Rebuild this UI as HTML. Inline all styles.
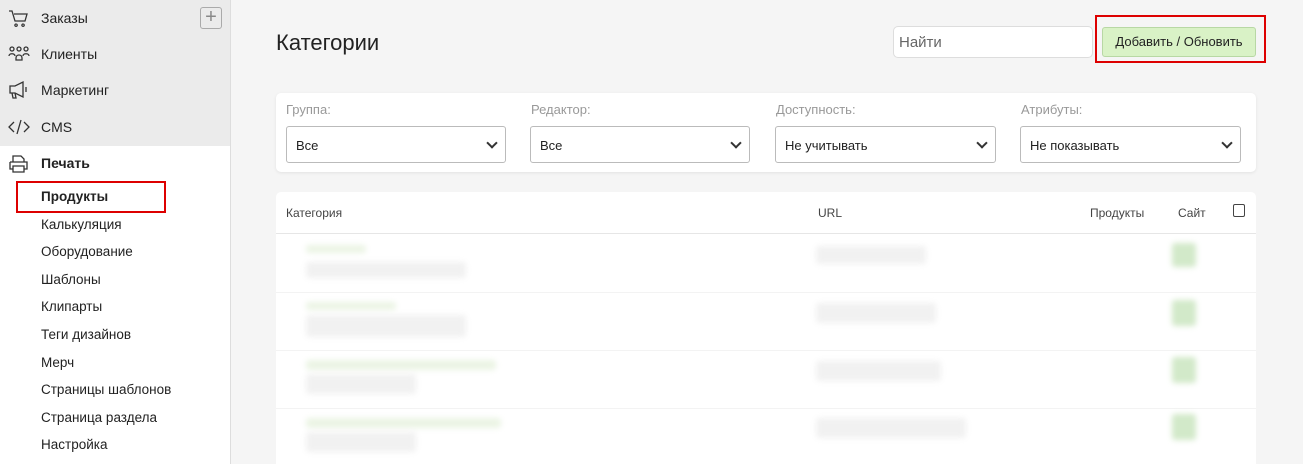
<!DOCTYPE html><html><head><meta charset="utf-8"><style>
*{box-sizing:border-box;margin:0;padding:0}
html,body{width:1303px;height:464px;overflow:hidden}
body{background:#f5f5f5;font-family:"Liberation Sans",sans-serif;position:relative;color:#222}
.a{position:absolute}
.sb{left:0;top:0;width:231px;height:464px;background:#fff;border-right:1px solid #ddd}
.sbg{left:0;top:0;width:230px;height:146px;background:#ebebeb}
.it{left:41px;font-size:14px;color:#222;line-height:16px}
.sub{left:41px;font-size:13.5px;color:#222;line-height:16px}
.lbl{font-size:13px;color:#999}
.sel{height:37px;border:1px solid #bbb;border-radius:3px;background:#fff;font-size:13px;padding:11px 9px;color:#222}
.sel:after{content:"";position:absolute;right:9px;top:12px;width:6px;height:6px;border-right:2px solid #333;border-bottom:2px solid #333;transform:rotate(45deg)}
.th{font-size:12px;color:#444;top:206px}
.bl{filter:blur(3px);border-radius:3px}
.g{background:#f1f1f1}.gr{background:#ebf4e4}.sq{background:#d2e9c9}
</style></head><body>
<div class="a sb"></div><div class="a sbg"></div>
<svg class="a" style="left:8px;top:8px" width="24" height="180" fill="none" stroke="#333" stroke-width="1.3">
<path d="M1 3h3l3 10h10l2-7H6M8 16a1.2 1.2 0 1 0 .1 0M15 16a1.2 1.2 0 1 0 .1 0"/>
<g transform="translate(0,38)"><circle cx="4" cy="3" r="2"/><circle cx="11" cy="3" r="2"/><circle cx="18" cy="3" r="2"/><path d="M1 10c0-3 6-3 6 0M8 12c0-4 6-4 6 0v2H8zM15 10c0-3 6-3 6 0"/></g>
<g transform="translate(0,74)"><path d="M2 4h5l8-4v15l-8-4H2zM4 11l1 5h3l-1-5M18 5v5"/></g>
<g transform="translate(0,111)"><path d="M6 3L1 8l5 5M16 3l5 5-5 5M13 1L9 15"/></g>
<g transform="translate(1,147)"><path d="M4 1h8l3 3v3H4zM1 7h17v7h-3M4 14H1V7M4 11h11v6H4z"/></g>
</svg>
<div class="a it" style="top:10px">Заказы</div>
<div class="a" style="left:200px;top:7px;width:22px;height:22px;border:1px solid #aaa;border-radius:3px;color:#888;font-size:20px;line-height:19px;text-align:center">+</div>
<div class="a it" style="top:46px">Клиенты</div>
<div class="a it" style="top:82px">Маркетинг</div>
<div class="a it" style="top:119px">CMS</div>
<div class="a it" style="top:155px;font-weight:bold">Печать</div>
<div class="a" style="left:16px;top:181px;width:150px;height:32px;border:2px solid #d00"></div>
<div class="a sub" style="top:189px;font-weight:bold">Продукты</div>
<div class="a sub" style="top:217px">Калькуляция</div>
<div class="a sub" style="top:244px">Оборудование</div>
<div class="a sub" style="top:272px">Шаблоны</div>
<div class="a sub" style="top:299px">Клипарты</div>
<div class="a sub" style="top:327px">Теги дизайнов</div>
<div class="a sub" style="top:355px">Мерч</div>
<div class="a sub" style="top:382px">Страницы шаблонов</div>
<div class="a sub" style="top:410px">Страница раздела</div>
<div class="a sub" style="top:437px">Настройка</div>

<div class="a" style="left:276px;top:30px;font-size:22px;color:#222">Категории</div>
<div class="a" style="left:893px;top:26px;width:200px;height:32px;background:#fff;border:1px solid #ddd;border-radius:5px;font-size:15px;color:#666;padding:7px 5px">Найти</div>
<div class="a" style="left:1095px;top:15px;width:171px;height:48px;border:2px solid #d00"></div>
<div class="a" style="left:1102px;top:27px;width:154px;height:30px;background:#d9f2c6;border:1px solid #b8d8a4;border-radius:3px;font-size:13px;color:#222;text-align:center;line-height:28px">Добавить / Обновить</div>

<div class="a" style="left:276px;top:93px;width:980px;height:79px;background:#fff;border-radius:5px;box-shadow:0 1px 3px rgba(0,0,0,.08)"></div>
<div class="a lbl" style="left:286px;top:102px">Группа:</div>
<div class="a lbl" style="left:531px;top:102px">Редактор:</div>
<div class="a lbl" style="left:776px;top:102px">Доступность:</div>
<div class="a lbl" style="left:1021px;top:102px">Атрибуты:</div>
<div class="a sel" style="left:286px;top:126px;width:220px">Все</div>
<div class="a sel" style="left:530px;top:126px;width:220px">Все</div>
<div class="a sel" style="left:775px;top:126px;width:221px">Не учитывать</div>
<div class="a sel" style="left:1020px;top:126px;width:221px">Не показывать</div>

<div class="a" style="left:276px;top:192px;width:980px;height:280px;background:#fff;border-radius:5px 5px 0 0"></div>
<div class="a" style="left:276px;top:233px;width:980px;height:1px;background:#e6e6e6"></div>
<div class="a th" style="left:286px">Категория</div>
<div class="a th" style="left:818px">URL</div>
<div class="a th" style="left:1090px">Продукты</div>
<div class="a th" style="left:1178px">Сайт</div>
<div class="a" style="left:1233px;top:204px;width:12px;height:13px;border:1px solid #444;border-radius:2px"></div>
<div class="a" style="left:276px;top:292px;width:980px;height:1px;background:#f3f3f3"></div>
<div class="a" style="left:276px;top:350px;width:980px;height:1px;background:#f3f3f3"></div>
<div class="a" style="left:276px;top:408px;width:980px;height:1px;background:#f3f3f3"></div>

<div class="a bl gr" style="left:306px;top:245px;width:60px;height:8px"></div>
<div class="a bl g" style="left:306px;top:262px;width:160px;height:16px"></div>
<div class="a bl g" style="left:816px;top:246px;width:110px;height:18px"></div>
<div class="a bl sq" style="left:1172px;top:243px;width:24px;height:24px"></div>

<div class="a bl gr" style="left:306px;top:302px;width:90px;height:8px"></div>
<div class="a bl g" style="left:306px;top:315px;width:160px;height:22px"></div>
<div class="a bl g" style="left:816px;top:303px;width:120px;height:20px"></div>
<div class="a bl sq" style="left:1172px;top:300px;width:24px;height:26px"></div>

<div class="a bl gr" style="left:306px;top:360px;width:190px;height:10px"></div>
<div class="a bl g" style="left:306px;top:374px;width:110px;height:20px"></div>
<div class="a bl g" style="left:816px;top:361px;width:125px;height:20px"></div>
<div class="a bl sq" style="left:1172px;top:357px;width:24px;height:26px"></div>

<div class="a bl gr" style="left:306px;top:418px;width:195px;height:10px"></div>
<div class="a bl g" style="left:306px;top:432px;width:110px;height:20px"></div>
<div class="a bl g" style="left:816px;top:418px;width:150px;height:20px"></div>
<div class="a bl sq" style="left:1172px;top:414px;width:24px;height:26px"></div>
</body></html>
